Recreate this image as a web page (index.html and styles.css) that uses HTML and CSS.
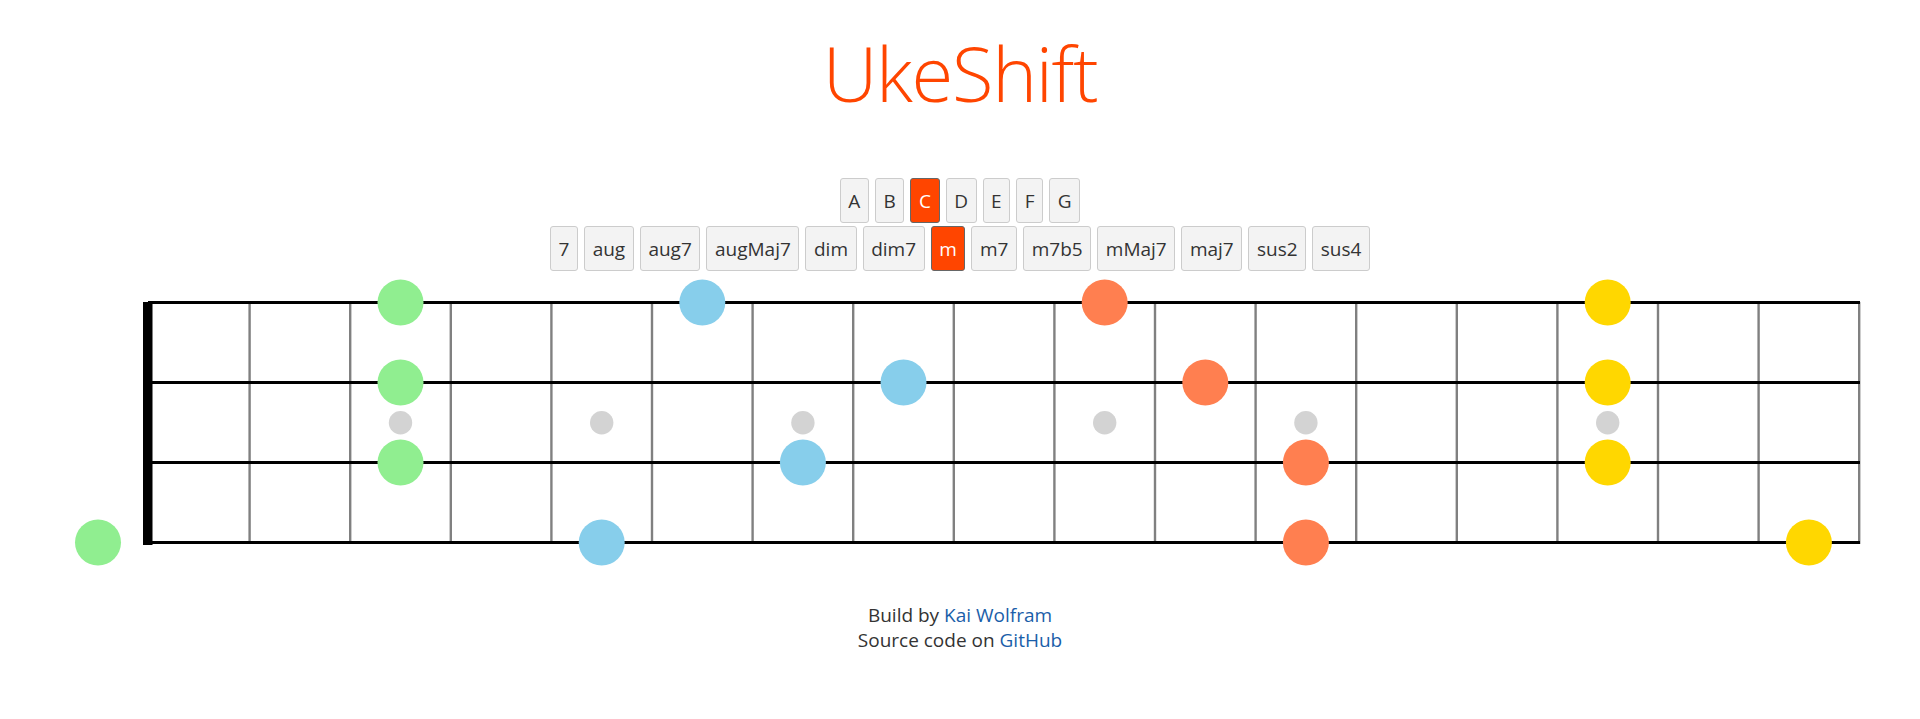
FILE: index.html
```html
<!DOCTYPE html>
<html lang="en">
<head>
<meta charset="utf-8">
<title>UkeShift</title>
<link rel="stylesheet" href="styles.css">
</head>
<body>
<header class="header">
  <h1 class="title">UkeShift</h1>
</header>
<main class="main">
  <div class="picker">
    <div class="btn-row">
      <button class="btn">A</button>
      <button class="btn">B</button>
      <button class="btn btn-active">C</button>
      <button class="btn">D</button>
      <button class="btn">E</button>
      <button class="btn">F</button>
      <button class="btn">G</button>
    </div>
    <div class="btn-row">
      <button class="btn">7</button>
      <button class="btn">aug</button>
      <button class="btn">aug7</button>
      <button class="btn">augMaj7</button>
      <button class="btn">dim</button>
      <button class="btn">dim7</button>
      <button class="btn btn-active">m</button>
      <button class="btn">m7</button>
      <button class="btn">m7b5</button>
      <button class="btn">mMaj7</button>
      <button class="btn">maj7</button>
      <button class="btn">sus2</button>
      <button class="btn">sus4</button>
    </div>
  </div>
  <svg class="fretboard" width="1920" height="300" viewBox="0 0 1920 300">
    <g class="frets" stroke="#808080" stroke-width="2.4">
      <line x1="249.6" y1="30" x2="249.6" y2="272"/>
      <line x1="350.2" y1="30" x2="350.2" y2="272"/>
      <line x1="450.8" y1="30" x2="450.8" y2="272"/>
      <line x1="551.4" y1="30" x2="551.4" y2="272"/>
      <line x1="652.0" y1="30" x2="652.0" y2="272"/>
      <line x1="752.6" y1="30" x2="752.6" y2="272"/>
      <line x1="853.2" y1="30" x2="853.2" y2="272"/>
      <line x1="953.8" y1="30" x2="953.8" y2="272"/>
      <line x1="1054.4" y1="30" x2="1054.4" y2="272"/>
      <line x1="1155.0" y1="30" x2="1155.0" y2="272"/>
      <line x1="1255.6" y1="30" x2="1255.6" y2="272"/>
      <line x1="1356.2" y1="30" x2="1356.2" y2="272"/>
      <line x1="1456.8" y1="30" x2="1456.8" y2="272"/>
      <line x1="1557.4" y1="30" x2="1557.4" y2="272"/>
      <line x1="1658.0" y1="30" x2="1658.0" y2="272"/>
      <line x1="1758.6" y1="30" x2="1758.6" y2="272"/>
      <line x1="1859.2" y1="30" x2="1859.2" y2="272"/>
    </g>
    <g class="strings" stroke="#000" stroke-width="3">
      <line x1="148" y1="30.5" x2="1860" y2="30.5"/>
      <line x1="148" y1="110.5" x2="1860" y2="110.5"/>
      <line x1="148" y1="190.5" x2="1860" y2="190.5"/>
      <line x1="148" y1="270.5" x2="1860" y2="270.5"/>
    </g>
    <rect class="nut" x="143" y="30" width="9.5" height="243" fill="#000"/>
    <g class="inlays" fill="#d3d3d3">
      <circle cx="400.5" cy="150.8" r="11.7"/>
      <circle cx="601.7" cy="150.8" r="11.7"/>
      <circle cx="802.9" cy="150.8" r="11.7"/>
      <circle cx="1104.7" cy="150.8" r="11.7"/>
      <circle cx="1305.9" cy="150.8" r="11.7"/>
      <circle cx="1607.7" cy="150.8" r="11.7"/>
    </g>
    <g class="notes">
      <circle cx="400.5" cy="30.5" r="23" fill="#90ee90"/>
      <circle cx="702.3" cy="30.5" r="23" fill="#87ceeb"/>
      <circle cx="1104.7" cy="30.5" r="23" fill="#ff7f50"/>
      <circle cx="1607.7" cy="30.5" r="23" fill="#ffd700"/>

      <circle cx="400.5" cy="110.5" r="23" fill="#90ee90"/>
      <circle cx="903.5" cy="110.5" r="23" fill="#87ceeb"/>
      <circle cx="1205.3" cy="110.5" r="23" fill="#ff7f50"/>
      <circle cx="1607.7" cy="110.5" r="23" fill="#ffd700"/>

      <circle cx="400.5" cy="190.5" r="23" fill="#90ee90"/>
      <circle cx="802.9" cy="190.5" r="23" fill="#87ceeb"/>
      <circle cx="1305.9" cy="190.5" r="23" fill="#ff7f50"/>
      <circle cx="1607.7" cy="190.5" r="23" fill="#ffd700"/>

      <circle cx="98" cy="270.5" r="23" fill="#90ee90"/>
      <circle cx="601.7" cy="270.5" r="23" fill="#87ceeb"/>
      <circle cx="1305.9" cy="270.5" r="23" fill="#ff7f50"/>
      <circle cx="1808.9" cy="270.5" r="23" fill="#ffd700"/>
    </g>
  </svg>
</main>
<footer class="footer">
  <p class="footer-line">Build by <a class="link" href="#">Kai Wolfram</a></p>
  <p class="footer-line">Source code on <a class="link" href="#">GitHub</a></p>
</footer>
</body>
</html>
```
FILE: styles.css
```css
html, body {
  margin: 0;
  padding: 0;
  background: #fff;
}

body {
  font-family: "Open Sans", "Noto Sans", sans-serif;
  color: #333;
}

.header {
  padding-top: 27px;
  text-align: center;
}

.title {
  margin: 0;
  font-family: "Open Sans", "Noto Sans", sans-serif;
  font-weight: 300;
  font-size: 76px;
  line-height: 91px;
  letter-spacing: -1.3px;
  color: #ff4500;
}

.main {
  margin-top: 60px;
}

.picker {
  display: flex;
  flex-direction: column;
  align-items: center;
  gap: 3px;
}

.btn-row {
  display: flex;
  justify-content: center;
  gap: 6px;
}

.btn {
  height: 45px;
  padding: 0 7.6px;
  font-family: "Open Sans", "Noto Sans", sans-serif;
  font-size: 19px;
  color: #333;
  background: #f3f3f3;
  border: 1px solid #ccc;
  border-radius: 3px;
  cursor: pointer;
}

.btn-active {
  background: #ff4500;
  border-color: #666;
  color: #fff;
}

.fretboard {
  display: block;
  margin-top: 1px;
}

.footer {
  margin-top: 31px;
  text-align: center;
  font-size: 19px;
  line-height: 25px;
}

.footer-line {
  margin: 0;
}

.link {
  color: #1a5ea9;
  text-decoration: none;
}
```
